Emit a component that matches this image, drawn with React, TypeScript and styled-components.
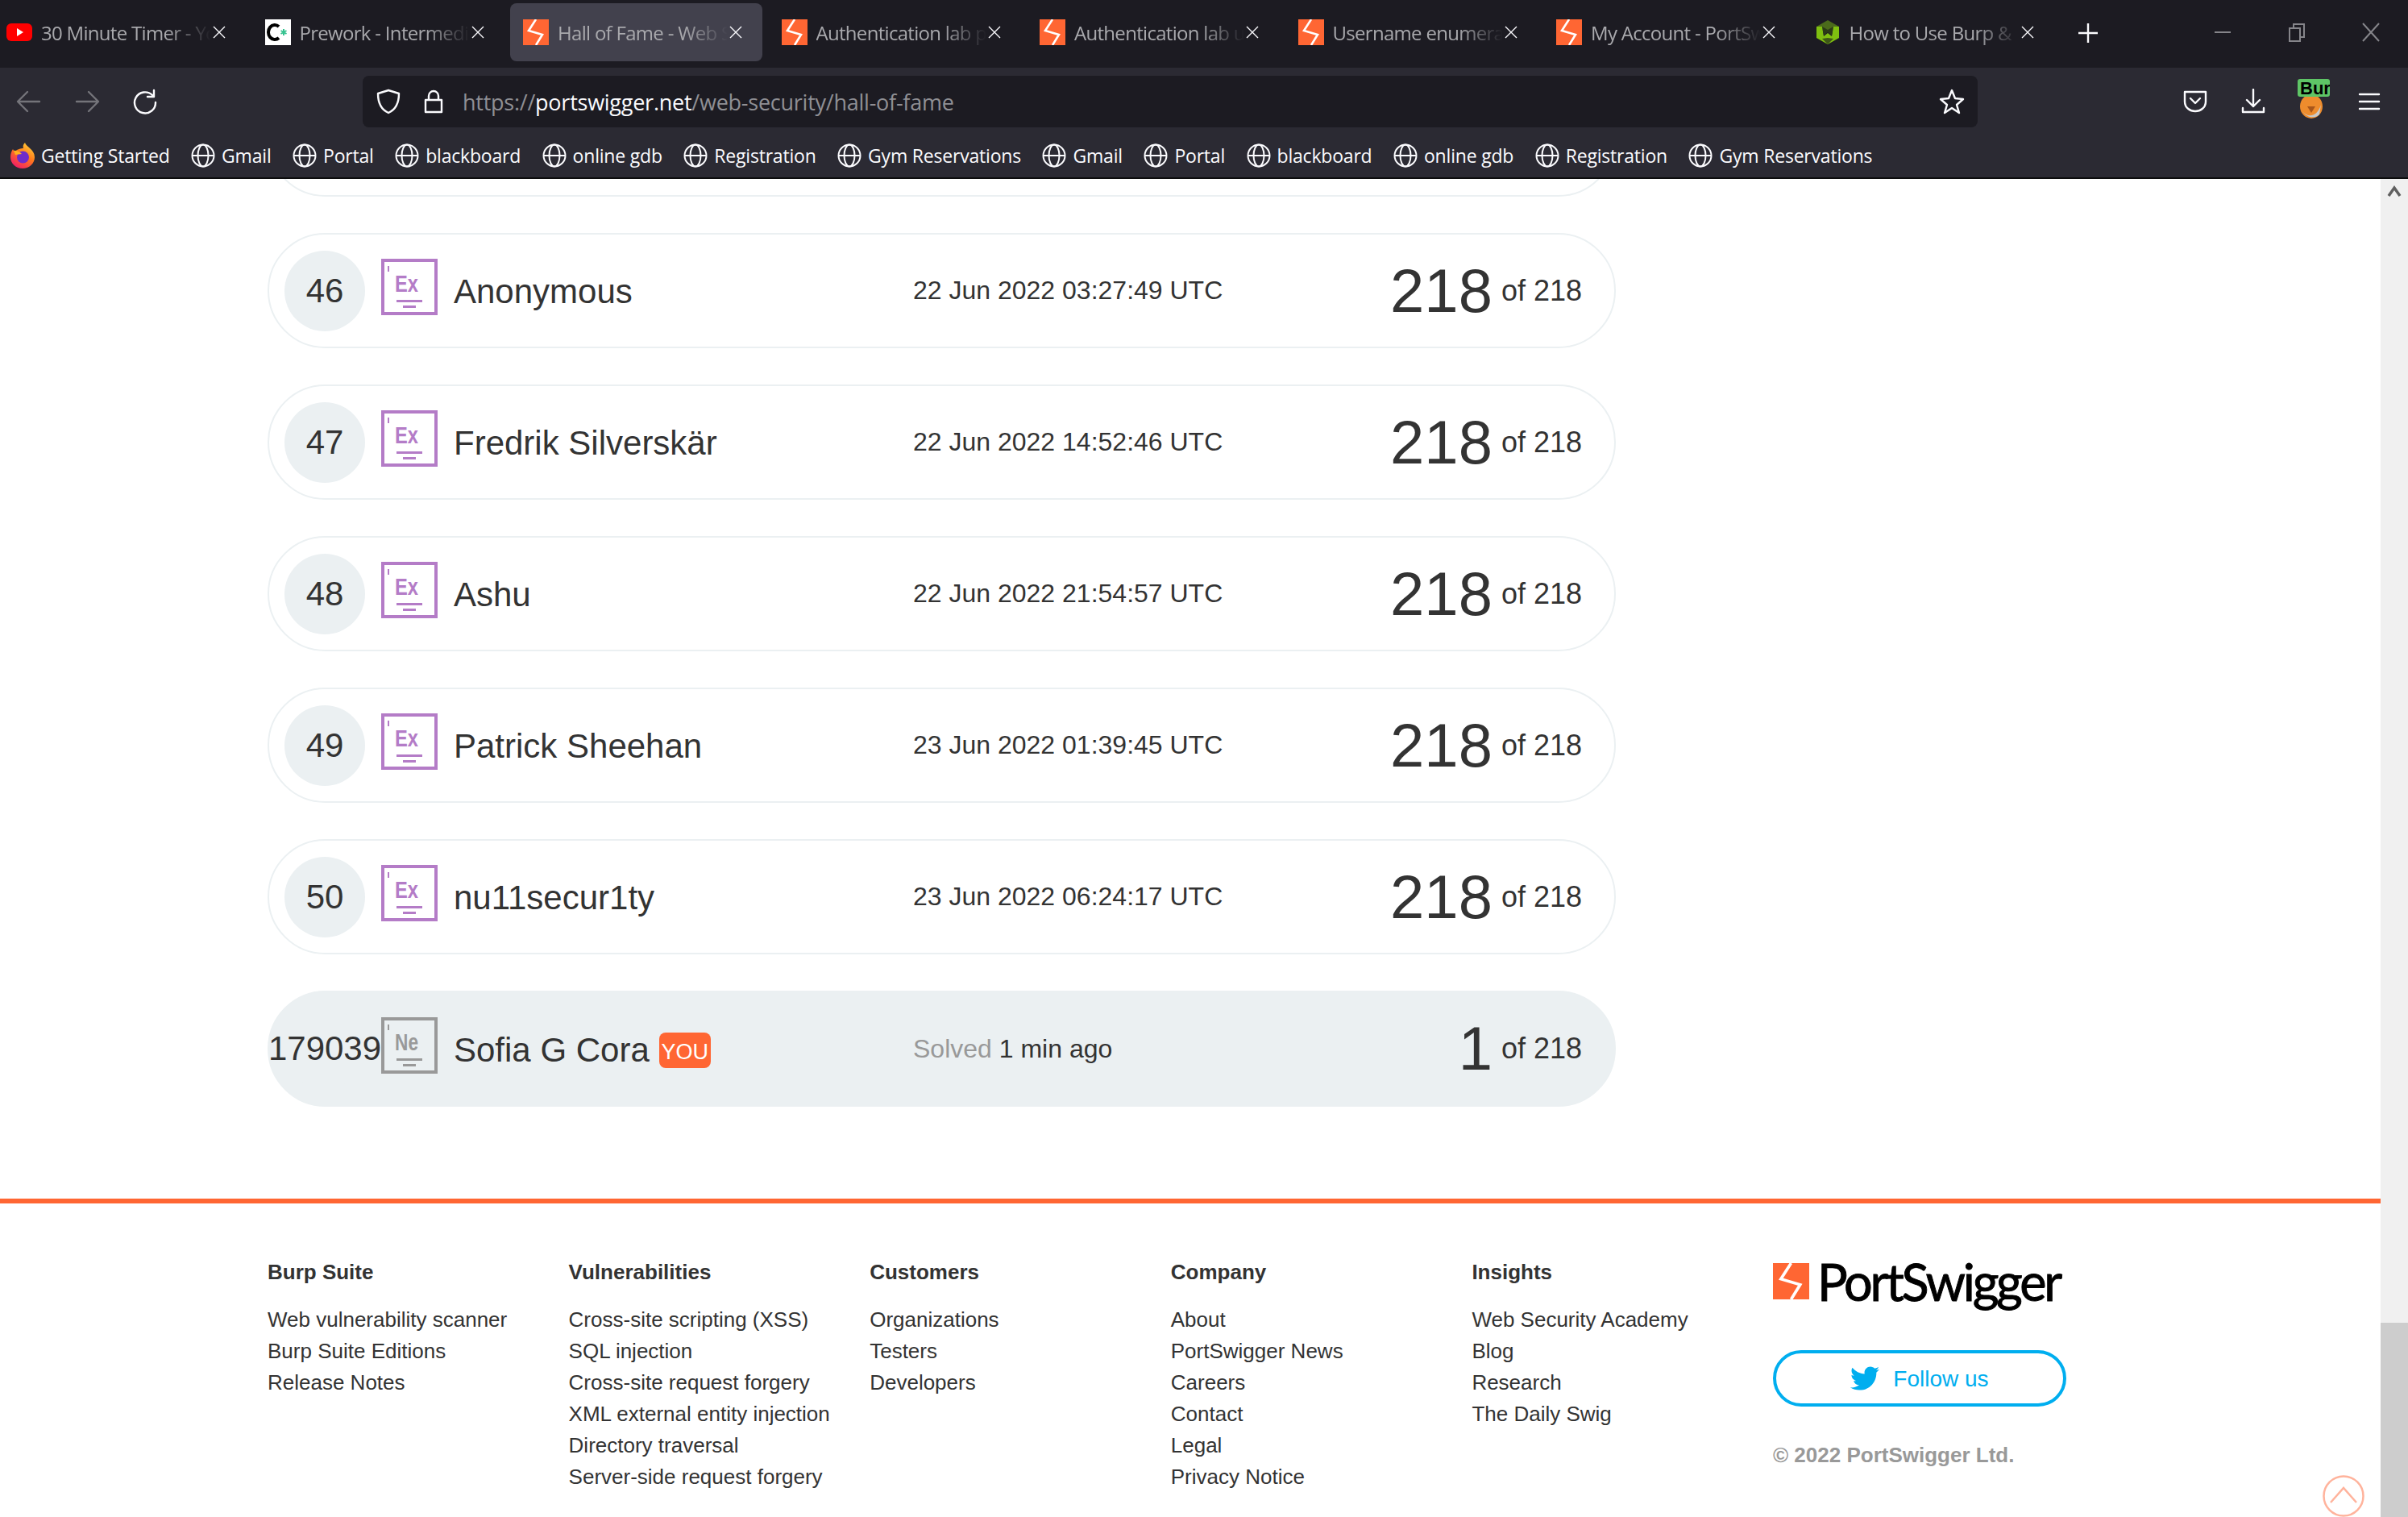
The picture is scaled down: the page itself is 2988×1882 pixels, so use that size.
import * as React from "react";
import styled, { createGlobalStyle } from "styled-components";
import { FaTwitter } from "react-icons/fa";

const GlobalStyle = createGlobalStyle`
    html, body {
        margin: 0;
        height: 1882px;
        overflow: hidden;
        background: #fff;
    }
    * { box-sizing: border-box; }
`;

const Shell = styled.div`
    position: relative;
    display: flex;
    flex-direction: column;
    width: 2988px;
    height: 1882px;
    overflow: hidden;
`;

/* browser chrome */

const TabBar = styled.div`
    display: flex;
    align-items: stretch;
    height: 84px;
    background: #1c1b22;
    font-family: "Open Sans", sans-serif;
`;

const TabStrip = styled.div`
    display: flex;
    gap: 8px;
    margin-left: -8px;
    padding-top: 4px;
    padding-bottom: 8px;
`;

const Tab = styled.div<{ $active?: boolean }>`
    display: flex;
    align-items: center;
    width: 312.5px;
    padding-left: 16px;
    border-radius: 8px;
    background: ${props => (props.$active ? "#42414d" : "transparent")};
`;

const TabFavicon = styled.svg`
    flex: none;
    width: 32px;
    height: 32px;
`;

const TabTitle = styled.span`
    flex: none;
    width: 211px;
    margin-left: 11px;
    overflow: hidden;
    white-space: nowrap;
    font-size: 24px;
    letter-spacing: -0.7px;
    color: #a9a9ad;
    -webkit-mask-image: linear-gradient(to right, #000 74%, transparent 100%);
    mask-image: linear-gradient(to right, #000 74%, transparent 100%);
`;

const TabClose = styled.svg`
    flex: none;
    width: 16px;
    height: 16px;
    margin-left: 2px;
    stroke: #fbfbfe;
    stroke-width: 1.4;
`;

const NewTab = styled.svg`
    flex: none;
    align-self: center;
    width: 26px;
    height: 26px;
    margin: 0 0 2px 30px;
    stroke: #fbfbfe;
    stroke-width: 2.4;
`;

const WindowControls = styled.div`
    display: flex;
    margin-left: auto;
`;

const WindowButton = styled.div`
    display: flex;
    align-items: center;
    justify-content: center;
    width: 92px;
    padding-bottom: 5px;
    & svg {
        width: 24px;
        height: 24px;
        fill: none;
        stroke: #85858a;
        stroke-width: 2;
    }
`;

const NavBar = styled.div`
    display: flex;
    align-items: center;
    height: 84px;
    background: #2b2a33;
`;

const NavButton = styled.div`
    display: flex;
    align-items: center;
    justify-content: center;
    width: 72px;
`;

const NavIcon = styled.svg<{ $dim?: boolean }>`
    width: 32px;
    height: 32px;
    fill: none;
    stroke: ${props => (props.$dim ? "#74747a" : "#fbfbfe")};
    stroke-width: 2.4;
    stroke-linecap: round;
    stroke-linejoin: round;
`;

const UrlBar = styled.div`
    display: flex;
    align-items: center;
    width: 2004px;
    height: 64px;
    margin-left: 234px;
    padding: 0 16px;
    border-radius: 8px;
    background: #1c1b22;
    font-family: "Open Sans", sans-serif;
    font-size: 27px;
    letter-spacing: -0.25px;
    color: #8f8f94;
`;

const UrlIcons = styled.div`
    display: flex;
    align-items: center;
    gap: 24px;
    width: 108px;
`;

const UrlHost = styled.span`
    color: #fbfbfe;
`;

const UrlStar = styled.div`
    margin-left: auto;
    display: flex;
`;

const NavActions = styled.div`
    display: flex;
    margin-left: 234px;
`;

const ExtensionSlot = styled(NavButton)`
    position: relative;
    height: 48px;
`;

const BurpBadge = styled.span`
    position: absolute;
    left: 19px;
    top: -4px;
    width: 40px;
    height: 22px;
    overflow: hidden;
    border-radius: 3px;
    background: #5ec566;
    font-family: "Liberation Sans", sans-serif;
    font-size: 22px;
    font-weight: 700;
    line-height: 23px;
    color: #000;
    text-indent: 3px;
`;

const BookmarksBar = styled.div`
    display: flex;
    align-items: center;
    gap: 26.5px;
    height: 54px;
    padding: 0 0 2px 13px;
    border-bottom: 2px solid #0c0c0d;
    background: #2b2a33;
    font-family: "Open Sans", sans-serif;
    font-size: 23px;
    letter-spacing: -0.2px;
    color: #fbfbfe;
`;

const Bookmark = styled.div`
    display: flex;
    align-items: center;
    gap: 8px;
    white-space: nowrap;
`;

const GlobeIcon = styled.svg`
    flex: none;
    width: 30px;
    height: 30px;
    fill: none;
    stroke: #fbfbfe;
    stroke-width: 2;
`;

/* page */

const Viewport = styled.div`
    flex: 1;
    display: flex;
    min-height: 0;
`;

const Page = styled.main`
    flex: 1;
    min-width: 0;
    overflow: hidden;
    background: #fff;
    font-family: "Liberation Sans", Arial, sans-serif;
    color: #333;
`;

const Board = styled.div`
    display: flex;
    flex-direction: column;
    gap: 45px;
    width: 1673px;
    margin: -121px 0 0 332px;
`;

const Row = styled.div<{ $self?: boolean }>`
    display: flex;
    align-items: center;
    height: ${props => (props.$self ? "144px" : "143px")};
    padding: 0 40px 0 19px;
    border: 2px solid #ebf0f2;
    border-radius: 72px;
    background: ${props => (props.$self ? "#ebf0f2" : "#fff")};
`;

const Rank = styled.div`
    flex: none;
    display: flex;
    align-items: center;
    justify-content: center;
    width: 100px;
    height: 100px;
    border-radius: 50%;
    background: #ebf0f2;
    font-size: 42px;
    white-space: nowrap;
`;

const Element = styled.svg<{ $tone: string }>`
    flex: none;
    width: 70px;
    height: 70px;
    margin: 0 20px 9px;
    color: ${props => props.$tone};
`;

const Name = styled.div`
    flex: none;
    display: flex;
    align-items: center;
    gap: 12px;
    width: 570px;
    padding-top: 3px;
    font-size: 42px;
    line-height: 48px;
`;

const YouTag = styled.span`
    display: inline-block;
    width: 64px;
    height: 44px;
    margin-top: 1px;
    border-radius: 8px;
    background: #ff6633;
    color: #fff;
    font-size: 27px;
    line-height: 48px;
    text-align: center;
`;

const When = styled.div`
    font-size: 32px;
    white-space: nowrap;
`;

const Muted = styled.span`
    color: #999;
`;

const Score = styled.div`
    display: flex;
    align-items: center;
    gap: 11px;
    margin-left: auto;
    font-size: 36px;
`;

const ScoreValue = styled.span`
    font-size: 76px;
    line-height: 76px;
`;

const Footer = styled.footer`
    display: grid;
    grid-template-columns: repeat(5, 373.6px) auto;
    margin-top: 114px;
    padding: 66px 0 0 332px;
    border-top: 6px solid #ff6633;
    font-size: 26px;
    line-height: 39px;
`;

const FooterHeading = styled.div`
    margin-bottom: 20px;
    font-weight: 700;
`;

const FooterLink = styled.div`
    white-space: nowrap;
`;

const Brand = styled.div`
    display: flex;
    flex-direction: column;
    align-items: flex-start;
    margin-top: 8px;
`;

const Logo = styled.div`
    display: flex;
    align-items: flex-start;
    gap: 10px;
`;

const LogoMark = styled.svg`
    width: 45px;
    height: 45px;
`;

const LogoText = styled.span`
    font-family: Lato, sans-serif;
    font-size: 63px;
    line-height: 45px;
    letter-spacing: -3.2px;
    color: #000;
    -webkit-text-stroke: 0.9px #000;
`;

const FollowButton = styled.div`
    display: flex;
    align-items: center;
    justify-content: center;
    gap: 17px;
    width: 364px;
    height: 70px;
    margin-top: 63px;
    border: 4px solid #00aeef;
    border-radius: 35px;
    font-size: 28px;
    color: #00aeef;
    & svg {
        width: 36px;
        height: 36px;
    }
`;

const Copyright = styled.div`
    margin-top: 41px;
    font-weight: 700;
    color: #999;
`;

const ScrollTop = styled.svg`
    position: absolute;
    left: 2882px;
    top: 1830px;
    width: 52px;
    height: 52px;
    fill: none;
    stroke: #ffb39c;
    stroke-width: 2.5;
`;

const Scrollbar = styled.div`
    flex: none;
    display: flex;
    flex-direction: column;
    justify-content: space-between;
    width: 34px;
    background: #f0f0f0;
`;

const ScrollArrow = styled.svg`
    width: 34px;
    height: 34px;
    fill: none;
    stroke: #606060;
    stroke-width: 3.5;
`;

const ScrollThumb = styled.div`
    height: 241px;
    background: #cdcdcd;
`;

/* drawings */

const BurpFavicon = () => (
    <TabFavicon viewBox="0 0 32 32">
        <rect width="32" height="32" fill="#ff6633" />
        <path d="M16 0 L7 14 L24 19 L16 32" fill="none" stroke="#fff" strokeWidth="2.6" />
    </TabFavicon>
);

const YouTubeFavicon = () => (
    <TabFavicon viewBox="0 0 32 32">
        <rect y="5" width="32" height="22" rx="6" fill="#ff0000" />
        <path d="M13 11 L21 16 L13 21 Z" fill="#fff" />
    </TabFavicon>
);

const CodecademyFavicon = () => (
    <TabFavicon viewBox="0 0 32 32">
        <rect width="32" height="32" fill="#fff" />
        <path d="M17 9 A8 9 0 1 0 17 23" fill="none" stroke="#000" strokeWidth="4" />
        <path d="M23 12 V20 M19.5 14 L26.5 18 M26.5 14 L19.5 18" stroke="#35c28f" strokeWidth="2" />
    </TabFavicon>
);

const HexFavicon = () => (
    <TabFavicon viewBox="0 0 32 32">
        <path d="M16 1 L30 9 L16 16 L2 9 Z" fill="#4b6b1b" />
        <path d="M2 9 L9 9 L11 21 L16 17 L21 21 L23 9 L30 9 V23 L16 31 L2 23 Z" fill="#7fbf10" />
        <path d="M16 23 L23 24 L16 31 L9 24 Z" fill="#3e5618" />
        <path d="M9 9 L16 13 L23 9 L21 20 L16 16 L11 20 Z" fill="#2c3a17" />
    </TabFavicon>
);

const Firefox = () => (
    <svg width="30" height="32" viewBox="0 0 30 32" style={{ flex: "none" }}>
        <defs>
            <linearGradient id="fx" x1="0.8" y1="0" x2="0.2" y2="1">
                <stop offset="0" stopColor="#ffd43a" />
                <stop offset="0.45" stopColor="#ff7a1a" />
                <stop offset="1" stopColor="#f0146e" />
            </linearGradient>
        </defs>
        <path d="M18 0 C19 5 30 8 30 18 C30 26 23 32 15 32 C7 32 0 26 0 18 C0 14 1 11 3 8 C4 10 5 11 6 11 C8 8 13 7 16 7 C15 4 16 2 18 0 Z" fill="url(#fx)" />
        <circle cx="15.5" cy="18" r="7.5" fill="#6f2bc9" />
        <path d="M4 10 C8 9 12 12 14 14 L6 15 Z" fill="#ffb020" />
    </svg>
);

const Globe = () => (
    <GlobeIcon viewBox="0 0 30 30">
        <circle cx="15" cy="15" r="13.5" />
        <ellipse cx="15" cy="15" rx="6.5" ry="13.5" />
        <path d="M1.5 15 H28.5" />
    </GlobeIcon>
);

const Close = () => (
    <TabClose viewBox="0 0 16 16">
        <path d="M1 1 L15 15 M15 1 L1 15" />
    </TabClose>
);

const ElementBadge: React.FunctionComponent<{ symbol: string; tone: string }> = ({ symbol, tone }) => (
    <Element $tone={tone} viewBox="0 0 70 70">
        <rect x="2" y="2" width="66" height="66" fill="none" stroke="currentColor" strokeWidth="4" />
        <rect x="8" y="9" width="2" height="7" fill="currentColor" />
        <text
            x="17"
            y="41"
            fontFamily="Liberation Sans, sans-serif"
            fontSize="30"
            fontWeight="700"
            fill="currentColor"
            textLength="29"
            lengthAdjust="spacingAndGlyphs"
        >
            {symbol}
        </text>
        <rect x="19" y="51" width="32" height="3" fill="currentColor" />
        <rect x="27" y="58" width="16" height="3" fill="currentColor" />
    </Element>
);

const tabs = [
    { title: "30 Minute Timer - YouTube", icon: <YouTubeFavicon /> },
    { title: "Prework - Intermediate", icon: <CodecademyFavicon /> },
    { title: "Hall of Fame - Web Security", icon: <BurpFavicon />, active: true },
    { title: "Authentication lab p", icon: <BurpFavicon /> },
    { title: "Authentication lab u", icon: <BurpFavicon /> },
    { title: "Username enumeration", icon: <BurpFavicon /> },
    { title: "My Account - PortSwigger", icon: <BurpFavicon /> },
    { title: "How to Use Burp &", icon: <HexFavicon /> },
];

const bookmarks = [
    "Gmail", "Portal", "blackboard", "online gdb", "Registration", "Gym Reservations",
    "Gmail", "Portal", "blackboard", "online gdb", "Registration", "Gym Reservations",
];

const solvers = [
    { rank: 46, name: "Anonymous", date: "22 Jun 2022 03:27:49 UTC" },
    { rank: 47, name: "Fredrik Silverskär", date: "22 Jun 2022 14:52:46 UTC" },
    { rank: 48, name: "Ashu", date: "22 Jun 2022 21:54:57 UTC" },
    { rank: 49, name: "Patrick Sheehan", date: "23 Jun 2022 01:39:45 UTC" },
    { rank: 50, name: "nu11secur1ty", date: "23 Jun 2022 06:24:17 UTC" },
];

const footerColumns = [
    { heading: "Burp Suite", links: ["Web vulnerability scanner", "Burp Suite Editions", "Release Notes"] },
    {
        heading: "Vulnerabilities",
        links: [
            "Cross-site scripting (XSS)",
            "SQL injection",
            "Cross-site request forgery",
            "XML external entity injection",
            "Directory traversal",
            "Server-side request forgery",
        ],
    },
    { heading: "Customers", links: ["Organizations", "Testers", "Developers"] },
    { heading: "Company", links: ["About", "PortSwigger News", "Careers", "Contact", "Legal", "Privacy Notice"] },
    { heading: "Insights", links: ["Web Security Academy", "Blog", "Research", "The Daily Swig"] },
];

const App: React.FunctionComponent = () => (
    <Shell>
        <GlobalStyle />
        <TabBar>
            <TabStrip>
                {tabs.map(tab => (
                    <Tab key={tab.title} $active={tab.active}>
                        {tab.icon}
                        <TabTitle>{tab.title}</TabTitle>
                        <Close />
                    </Tab>
                ))}
            </TabStrip>
            <NewTab viewBox="0 0 26 26">
                <path d="M13 1 V25 M1 13 H25" />
            </NewTab>
            <WindowControls>
                <WindowButton>
                    <svg viewBox="0 0 24 24"><path d="M2 12 H22" /></svg>
                </WindowButton>
                <WindowButton>
                    <svg viewBox="0 0 24 24"><path d="M3 7 H16 V23 H3 Z M8 7 V2 H21 V18 H16" /></svg>
                </WindowButton>
                <WindowButton>
                    <svg viewBox="0 0 24 24"><path d="M2 1 L22 23 M22 1 L2 23" /></svg>
                </WindowButton>
            </WindowControls>
        </TabBar>
        <NavBar>
            <NavButton>
                <NavIcon $dim viewBox="0 0 32 32"><path d="M29 16 H3 M14 4 L2 16 L14 28" /></NavIcon>
            </NavButton>
            <NavButton>
                <NavIcon $dim viewBox="0 0 32 32"><path d="M3 16 H29 M18 4 L30 16 L18 28" /></NavIcon>
            </NavButton>
            <NavButton>
                <NavIcon viewBox="0 0 32 32"><path d="M25 8 A13 13 0 1 0 29 17 M27 2 V10 H19" /></NavIcon>
            </NavButton>
            <UrlBar>
                <UrlIcons>
                    <NavIcon viewBox="0 0 32 32">
                        <path d="M16 2 L29 6 C29 18 25 26 16 30 C7 26 3 18 3 6 Z" />
                    </NavIcon>
                    <NavIcon viewBox="0 0 32 32">
                        <path d="M10 14 V9 A6 6 0 0 1 22 9 V14 M6 14 H26 V29 H6 Z" />
                    </NavIcon>
                </UrlIcons>
                <span>
                    https://<UrlHost>portswigger.net</UrlHost>/web-security/hall-of-fame
                </span>
                <UrlStar>
                    <NavIcon viewBox="0 0 32 32">
                        <path d="M16 2 L20 12 L30 13 L22 20 L25 30 L16 24 L7 30 L10 20 L2 13 L12 12 Z" />
                    </NavIcon>
                </UrlStar>
            </UrlBar>
            <NavActions>
                <NavButton>
                    <NavIcon viewBox="0 0 32 32"><path d="M3 4 H29 V16 C29 24 22 28 16 28 C10 28 3 24 3 16 Z M10 12 L16 18 L22 12" /></NavIcon>
                </NavButton>
                <NavButton>
                    <NavIcon viewBox="0 0 32 32"><path d="M16 1 V22 M8 14 L16 22 L24 14 M3 24 V29 H29 V24" /></NavIcon>
                </NavButton>
                <ExtensionSlot>
                    <svg width="30" height="32" viewBox="0 0 30 32" style={{ marginTop: 12 }}>
                        <ellipse cx="15" cy="16" rx="14" ry="15" fill="#ee8c2d" />
                        <path d="M4 22 C10 30 22 30 27 14 L25 26 C20 31 10 31 4 22 Z" fill="#c9c9c9" />
                        <path d="M10 16 L20 16 L15 24 Z" fill="#a8561a" />
                    </svg>
                    <BurpBadge>Burp</BurpBadge>
                </ExtensionSlot>
                <NavButton>
                    <NavIcon viewBox="0 0 32 32"><path d="M4 7 H28 M4 16 H28 M4 25 H28" /></NavIcon>
                </NavButton>
            </NavActions>
        </NavBar>
        <BookmarksBar>
            <Bookmark>
                <Firefox />
                <span>Getting Started</span>
            </Bookmark>
            {bookmarks.map((label, index) => (
                <Bookmark key={index}>
                    <Globe />
                    <span>{label}</span>
                </Bookmark>
            ))}
        </BookmarksBar>
        <Viewport>
            <Page>
                <Board>
                    <Row />
                    {solvers.map(row => (
                        <Row key={row.rank}>
                            <Rank>{row.rank}</Rank>
                            <ElementBadge symbol="Ex" tone="#b47cc7" />
                            <Name>{row.name}</Name>
                            <When>{row.date}</When>
                            <Score>
                                <ScoreValue>218</ScoreValue>
                                <span>of 218</span>
                            </Score>
                        </Row>
                    ))}
                    <Row $self>
                        <Rank>179039</Rank>
                        <ElementBadge symbol="Ne" tone="#999999" />
                        <Name>
                            Sofia G Cora
                            <YouTag>YOU</YouTag>
                        </Name>
                        <When>
                            <Muted>Solved</Muted> 1 min ago
                        </When>
                        <Score>
                            <ScoreValue>1</ScoreValue>
                            <span>of 218</span>
                        </Score>
                    </Row>
                </Board>
                <Footer>
                    {footerColumns.map(column => (
                        <div key={column.heading}>
                            <FooterHeading>{column.heading}</FooterHeading>
                            {column.links.map(link => (
                                <FooterLink key={link}>{link}</FooterLink>
                            ))}
                        </div>
                    ))}
                    <Brand>
                        <Logo>
                            <LogoMark viewBox="0 0 32 32">
                                <rect width="32" height="32" fill="#ff6633" />
                                <path d="M16 0 L7 14 L24 19 L16 32" fill="none" stroke="#fff" strokeWidth="2.6" />
                            </LogoMark>
                            <LogoText>PortSwigger</LogoText>
                        </Logo>
                        <FollowButton>
                            <FaTwitter />
                            <span>Follow us</span>
                        </FollowButton>
                        <Copyright>© 2022 PortSwigger Ltd.</Copyright>
                    </Brand>
                </Footer>
            </Page>
            <Scrollbar>
                <ScrollArrow viewBox="0 0 34 34">
                    <path d="M10 21 L17 11 L24 21" />
                </ScrollArrow>
                <ScrollThumb />
            </Scrollbar>
        </Viewport>
        <ScrollTop viewBox="0 0 52 52">
            <circle cx="26" cy="26" r="24.5" />
            <path d="M10 34 L26 16 L42 34" />
        </ScrollTop>
    </Shell>
);

export default App;
